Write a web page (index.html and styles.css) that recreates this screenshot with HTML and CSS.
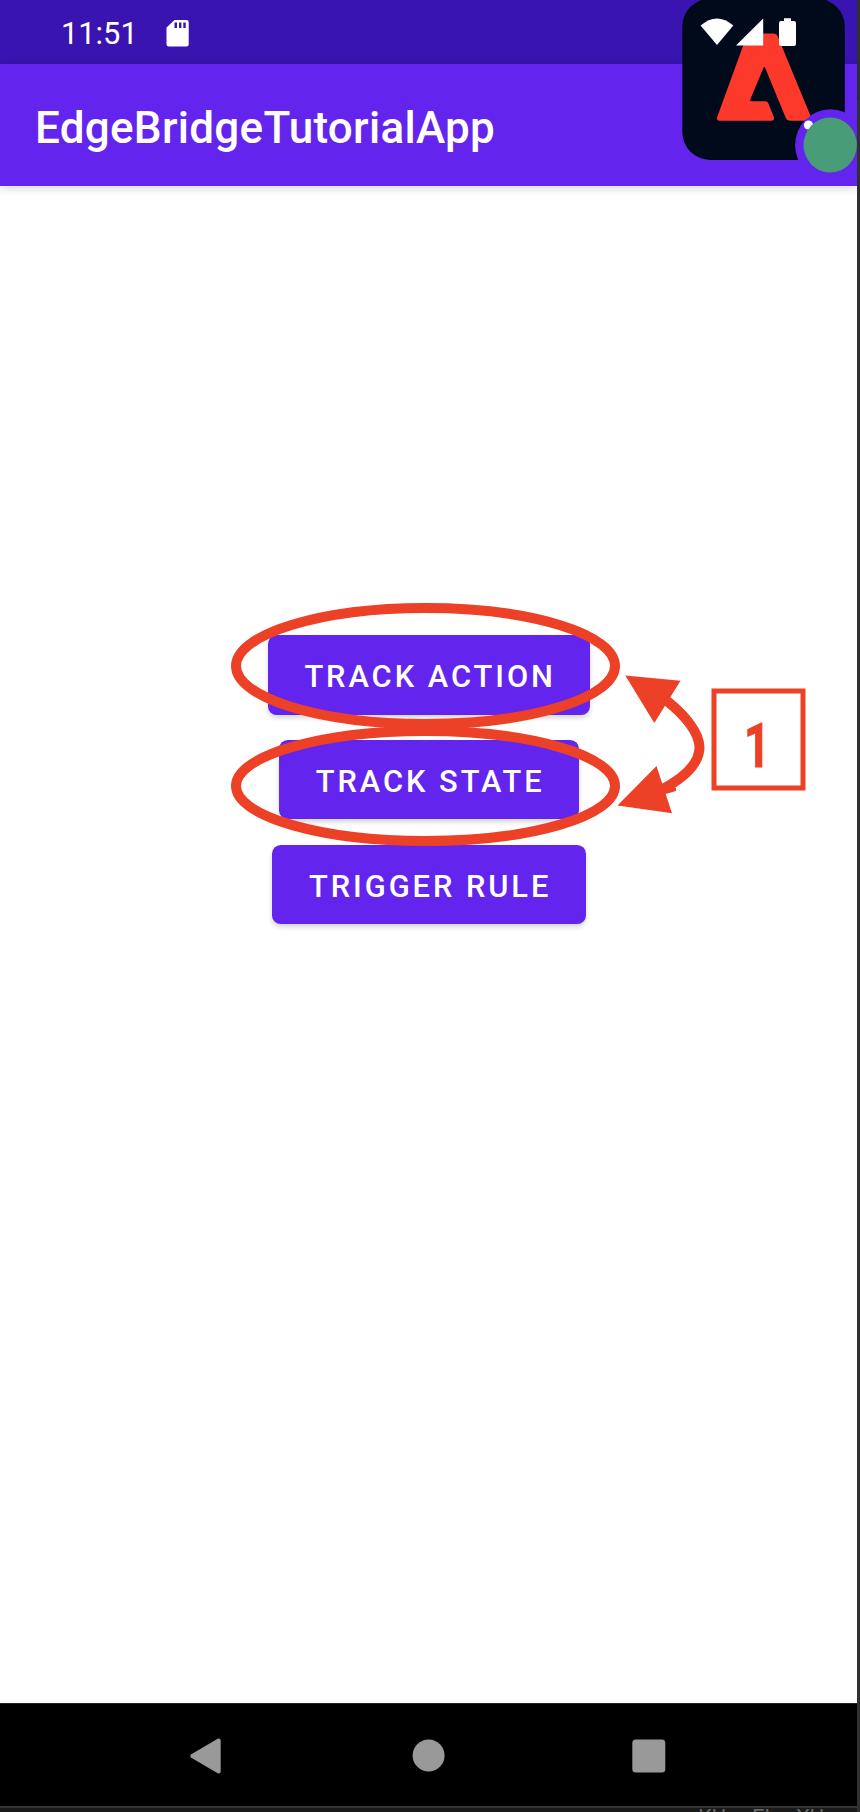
FILE: index.html
```
<!DOCTYPE html>
<html lang="en">
<head>
<meta charset="utf-8">
<title>EdgeBridgeTutorialApp</title>
<link rel="stylesheet" href="styles.css">
</head>
<body>
<div class="screen">
  <div class="phone">
    <div class="status-bar">
      <span class="clock">11:51</span>
      <svg class="sd-card" width="24" height="28" viewBox="0 0 24 28"><path fill="#fff" fill-rule="evenodd" d="M8.5 1H20.500Q22.700 1 22.700 3.200V25.500Q22.700 27.500 20.500 27.500H3Q.5 27.500 .5 25.500V8.600ZM8.500 3.600V9H11V3.600ZM13 3.600V9H15.400V3.600ZM17.300 3.600V9H19.700V3.600Z"/></svg>
    </div>
    <header class="app-bar"><h1 class="title">EdgeBridgeTutorialApp</h1></header>
    <main class="content">
      <button class="button">TRACK ACTION</button>
      <button class="button">TRACK STATE</button>
      <button class="button">TRIGGER RULE</button>
    </main>
    <nav class="nav-bar">
      <svg class="nav-icon" width="36" height="38" viewBox="0 0 36 38"><path d="M3.300 19L29.700 3.500V34.500Z" fill="#999" stroke="#999" stroke-width="4" stroke-linejoin="round"/></svg>
      <svg class="nav-icon" width="36" height="38" viewBox="0 0 36 38"><circle cx="18.600" cy="18.500" r="16" fill="#999"/></svg>
      <svg class="nav-icon" width="36" height="38" viewBox="0 0 36 38"><rect x="1.300" y="2.500" width="33" height="33" rx="3.500" fill="#999"/></svg>
    </nav>
  </div>
  <div class="footer"><span>KU</span><span>El</span><span>XU</span></div>

  <svg class="assurance" width="200" height="180" viewBox="660 0 200 180">
    <rect x="682.300" y="-1.500" width="162.500" height="161.500" rx="28" fill="#000a1b"/>
    <path d="M747 35Q748 33.500 750 33.500H774Q776.500 33.500 777.600 36L811 117Q812 120.700 809 120.700H790Q787 120.700 785.800 118L765 67.500Q764.300 66.300 763.600 67.500L750.300 99.500Q749.800 101.200 751.500 101.200H765.500Q767.400 101.200 768.200 103L773.800 117Q774.800 120.700 771.500 120.700H719.500Q716 120.700 717.200 117Z" fill="#fc392a"/>
    <ellipse cx="830.400" cy="145.200" rx="35.300" ry="36" fill="#6325ed"/>
    <rect x="857" y="100" width="10" height="80" fill="#303030"/>
    <circle cx="808.500" cy="125" r="4.600" fill="#fff"/>
    <ellipse cx="830.200" cy="145" rx="26.700" ry="27.500" fill="#489c78"/>
    <g fill="#fff">
      <path d="M700.600 25.500Q717 11.500 733.300 25.500L717 45Z"/>
      <path d="M736 45.400L763.200 18.500V45.400Z"/>
      <path d="M784 18.300H791V21H794Q796 21 796 23V44Q796 46 794 46H781Q779 46 779 44V23Q779 21 781 21H784Z"/>
    </g>
  </svg>

  <svg class="annotations" width="600" height="260" viewBox="220 590 600 260">
    <g fill="none" stroke="#ec4127" stroke-width="10">
      <ellipse cx="425.500" cy="666" rx="189.500" ry="58"/>
      <ellipse cx="425.500" cy="786" rx="189.500" ry="55"/>
      <path d="M667 701C686 716 699 733 699.500 747C699.500 763 684 778 661 790"/>
      <rect x="714" y="691" width="89" height="97" stroke-width="5"/>
    </g>
    <path fill="#ec4127" d="M625.300 675.500L680.500 680.800L654.300 723ZM617.500 805.500L656.500 766L672 813.300ZM668 785L676 788V791L662 795Z"/>
    <text x="0" y="0" class="step" transform="translate(744 766.500) scale(.75 1)">1</text>
  </svg>
</div>
</body>
</html>
```
FILE: styles.css
```
* { box-sizing: border-box; }
body { margin: 0; background: #303030; font-family: Roboto, sans-serif; }
.screen { position: relative; width: 860px; height: 1812px; overflow: hidden; }
.phone { width: 857px; height: 1806px; display: flex; flex-direction: column; background: #fff; }
.status-bar { height: 64px; flex: none; background: #3914b1; color: #fff; display: flex; align-items: center; padding: 2px 0 0 61px; }
.clock { font-size: 30.800px; width: 105px; line-height: 36px; padding-top: 1px; }
.sd-card { margin-top: -1px; }
.app-bar { height: 122px; flex: none; background: #6325ed; display: flex; align-items: center; padding: 5px 0 0 35px; box-shadow: 0 2px 9px rgba(0,0,0,.17); }
.title { margin: 0; color: #fff; font-size: 44px; line-height: 52px; font-weight: 500; letter-spacing: .280px; }
.content { flex: 1; display: flex; flex-direction: column; align-items: center; gap: 25.300px; padding: 449px 0 0 1px; }
.button { height: 79.500px; border: 0; border-radius: 8.800px; padding: 5px 34.200px 0 36.500px; background: #6325ed; color: #fff; font: 500 30.800px/36px Roboto, sans-serif; letter-spacing: 2.960px; box-shadow: 0 3px 5px rgba(0,0,0,.17); }
.nav-bar { height: 103px; flex: none; background: #000; border-top: 1px solid #222; display: flex; gap: 185px; padding: 33px 0 0 189px; }
.nav-icon { flex: none; }
.footer { width: 857px; height: 6px; overflow: hidden; background: #191919; border-top: 2px solid #333; display: flex; gap: 26px; padding-left: 698px; color: #666; font-size: 22px; line-height: 19px; }
.assurance { position: absolute; left: 660px; top: 0; }
.annotations { position: absolute; left: 220px; top: 590px; }
.step { font: 700 61px Roboto, sans-serif; fill: #ec4127; stroke: #ec4127; stroke-width: 1px; }
```
